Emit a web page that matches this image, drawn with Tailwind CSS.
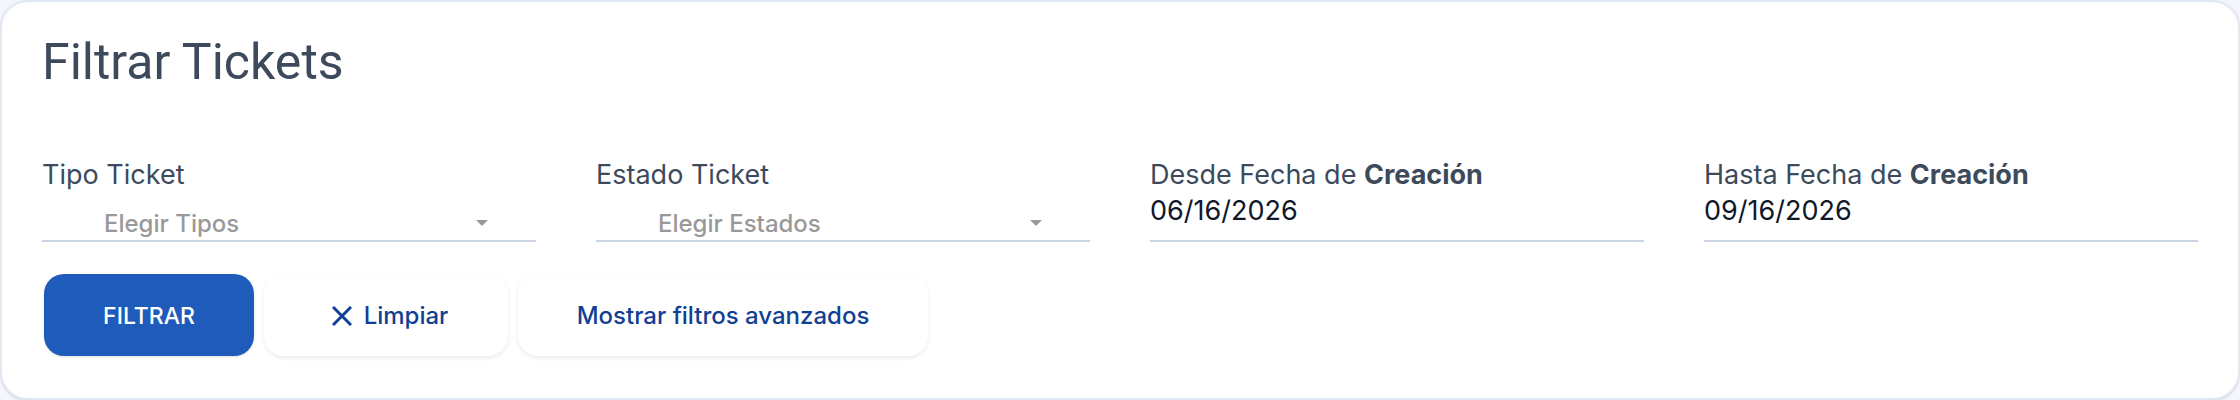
<!DOCTYPE html>
<html lang="es">

<head>
	<meta charset="UTF-8">
	<meta name="viewport" content="width=device-width, initial-scale=1.0">
	<title>Filtrar Tickets</title>
	<script src="https://cdn.jsdelivr.net/npm/@tailwindcss/browser@4"></script>
</head>

<body class="bg-[#f4f6fb] font-['Inter',sans-serif]">
	<form class="min-h-screen bg-white border-2 border-[#e2e8f2] rounded-[28px] shadow-sm px-10 pt-8 pb-10">
		<h1 class="font-['Roboto',sans-serif] text-[50px] leading-[56px] text-[#3d4a5c]">Filtrar Tickets</h1>

		<div class="grid grid-cols-4 gap-[60px] mt-16 text-[#3d4a5c] text-[27px] leading-[42px]">
			<div class="flex flex-col">
				<label for="tipo">Tipo Ticket</label>
				<div class="relative border-b-2 border-[#cbd5e4]">
					<select id="tipo" class="block appearance-none w-full h-11 pl-[62px] pt-3 text-[24px] leading-8 font-medium text-[#999999] bg-transparent outline-none">
						<option>Elegir Tipos</option>
					</select>
					<svg class="absolute right-12 top-6 w-3 h-[6px] fill-[#999999] pointer-events-none" viewBox="0 0 12 6"><path d="M0 0h12L6 6z"/></svg>
				</div>
			</div>
			<div class="flex flex-col">
				<label for="estado">Estado Ticket</label>
				<div class="relative border-b-2 border-[#cbd5e4]">
					<select id="estado" class="block appearance-none w-full h-11 pl-[62px] pt-3 text-[24px] leading-8 font-medium text-[#999999] bg-transparent outline-none">
						<option>Elegir Estados</option>
					</select>
					<svg class="absolute right-12 top-6 w-3 h-[6px] fill-[#999999] pointer-events-none" viewBox="0 0 12 6"><path d="M0 0h12L6 6z"/></svg>
				</div>
			</div>
			<div class="flex flex-col">
				<label for="desde">Desde Fecha de <strong class="font-bold">Creación</strong></label>
				<input id="desde" type="text" value="06/16/2026" class="w-full h-[46px] pb-4 border-b-2 border-[#cbd5e4] leading-7 text-[#0f172a] outline-none">
			</div>
			<div class="flex flex-col">
				<label for="hasta">Hasta Fecha de <strong class="font-bold">Creación</strong></label>
				<input id="hasta" type="text" value="09/16/2026" class="w-full h-[46px] pb-4 border-b-2 border-[#cbd5e4] leading-7 text-[#0f172a] outline-none">
			</div>
		</div>

		<div class="flex gap-[10px] mt-8 pl-[2px] text-[24px] font-medium text-[#123f94]">
			<button type="submit" class="w-[210px] h-[82px] pt-[2px] rounded-[20px] bg-[#1f5bba] text-[23px] text-white shadow-sm">FILTRAR</button>
			<button type="button" class="w-[244px] h-[82px] pl-2 pt-[2px] rounded-[20px] bg-white shadow-[0_2px_4px_#0f2a6018] flex items-center justify-center gap-3">
				<svg class="w-5 h-5" viewBox="0 0 20 20" fill="none" stroke="currentColor" stroke-width="3"><path d="M1 1l18 18M19 1L1 19"/></svg>
				Limpiar
			</button>
			<button type="button" class="w-[410px] h-[82px] pt-[2px] rounded-[20px] bg-white shadow-[0_2px_4px_#0f2a6018]">Mostrar filtros avanzados</button>
		</div>
	</form>
</body>

</html>
